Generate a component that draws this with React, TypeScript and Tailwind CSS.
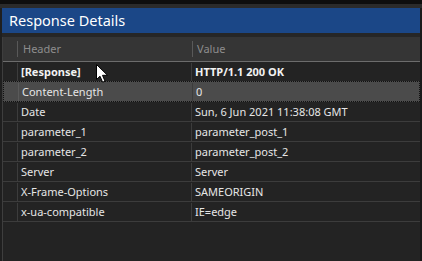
const rows: { name: string; value: string; bold?: boolean; selected?: boolean }[] = [
  { name: '[Response]', value: 'HTTP/1.1 200 OK', bold: true },
  { name: 'Content-Length', value: '0', selected: true },
  { name: 'Date', value: 'Sun, 6 Jun 2021 11:38:08 GMT' },
  { name: 'parameter_1', value: 'parameter_post_1' },
  { name: 'parameter_2', value: 'parameter_post_2' },
  { name: 'Server', value: 'Server' },
  { name: 'X-Frame-Options', value: 'SAMEORIGIN' },
  { name: 'x-ua-compatible', value: 'IE=edge' },
];

function Cursor() {
  return (
    <svg className="absolute left-[96px] top-[64px]" width="13" height="19" viewBox="0 0 13 19">
      <path d="M0.5 0.5 L0.5 15.5 L4 12.2 L6.6 18.2 L9 17.2 L6.5 11.3 L11.5 11.3 Z" fill="#ffffff" stroke="#000000" strokeWidth="1" />
    </svg>
  );
}

export default function App() {
  return (
    <div className="relative w-[422px] h-[261px] bg-[#1f1f1f] flex flex-col overflow-hidden font-['Noto_Sans',sans-serif] text-[11px]">
      <div className="h-[4px] bg-[#0e0e0e]" />
      <div className="h-[4px] bg-[#2b2b2b]" />
      <div className="flex-1 flex flex-col pl-[2px] pr-[2px]">
        {/* Title bar */}
        <div className="h-[25px] bg-[#1b4787] text-white text-[14.5px] pl-[7px] flex items-center leading-none">
          Response Details
        </div>
        <div className="h-[4px] bg-[#262626]" />

        {/* Grid */}
        <div className="flex-1 flex flex-col bg-[#232323] border-l border-[#3e3e3e]">
          <div className="h-[25px] flex bg-[#353535] border-b border-[#6c6c6c] text-[#8d8d8d]">
            <div className="w-[15px] flex items-center justify-end">
              <div className="w-px h-[16px] bg-[#595959]" />
            </div>
            <div className="w-[174px] flex items-center pl-[5px]">Header</div>
            <div className="w-px h-[16px] self-center bg-[#595959]" />
            <div className="flex-1 flex items-center pl-[4px]">Value</div>
          </div>

          {rows.map((r) => (
            <div
              key={r.name}
              className={`h-[20px] flex border-b pt-px ${
                r.selected
                  ? 'bg-[#4b4b4b] border border-dotted border-[#111111] -mt-px h-[21px]'
                  : 'border-[#3c3c3c]'
              } ${r.bold ? 'font-bold text-[#f2f2f2]' : 'text-[#e6e6e6]'}`}
            >
              <div className={`w-[15px] border-r ${r.selected ? 'border-[#5a5a5a]' : 'border-[#3c3c3c]'}`} />
              <div className="w-[174px] flex items-center pl-[3px] border-r border-[#3c3c3c]">{r.name}</div>
              <div className="flex-1 flex items-center pl-[3px]">{r.value}</div>
            </div>
          ))}
          <div className="flex-1" />
        </div>
      </div>
      <div className="absolute right-0 top-[8px] bottom-0 w-[2px] bg-[#1a1a1a]" />
      <Cursor />
    </div>
  );
}
